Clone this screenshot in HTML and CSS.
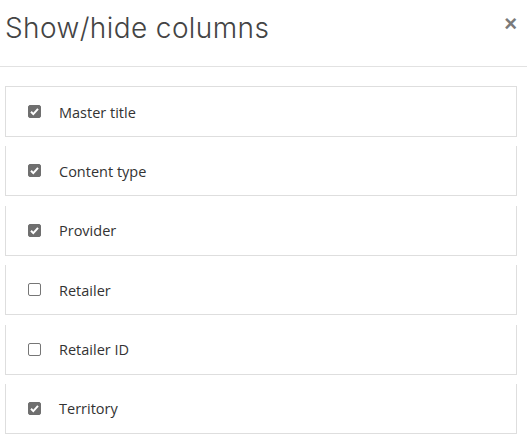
FILE: index.html
```html
<!DOCTYPE html>
<html>
<head>
  <title>Show/hide columns</title>
  <meta name="viewport" content="width=device-width, initial-scale=1.0">
  <link rel="stylesheet" href="styles.css">
</head>
<body>
  <div class="modal">
    <div class="modal-header">
      <h2 class="modal-title">Show/hide columns</h2>
      <button class="close" type="button">&times;</button>
    </div>
    <ul class="column-list">
      <li class="column-item"><label><input type="checkbox" checked> <span>Master title</span></label></li>
      <li class="column-item"><label><input type="checkbox" checked> <span>Content type</span></label></li>
      <li class="column-item"><label><input type="checkbox" checked> <span>Provider</span></label></li>
      <li class="column-item"><label><input type="checkbox"> <span>Retailer</span></label></li>
      <li class="column-item"><label><input type="checkbox"> <span>Retailer ID</span></label></li>
      <li class="column-item"><label><input type="checkbox" checked> <span>Territory</span></label></li>
    </ul>
  </div>
</body>
</html>
```

FILE: styles.css
```css
/* modal reset */
html, body, h2, ul, li {
  margin: 0;
  padding: 0;
}
body {
  background: #fff;
  font-family: "Open Sans", "Liberation Sans", sans-serif;
  color: #333;
}
ul {
  list-style: none;
}

.modal-header {
  display: flex;
  justify-content: space-between;
  align-items: flex-start;
  height: 66px;
  border-bottom: 1px solid #e2e2e2;
  padding: 0 10px 0 5px;
}
.modal-title {
  font-family: Inter, "Open Sans", sans-serif;
  font-weight: 300;
  font-size: 28px;
  letter-spacing: 0.4px;
  color: #444;
  line-height: 1;
  padding-top: 14px;
}
.close {
  border: 0;
  background: none;
  padding: 0;
  margin-top: 13px;
  font-family: "Liberation Sans", sans-serif;
  font-size: 22px;
  font-weight: bold;
  line-height: 1;
  color: #7a7a7a;
  cursor: pointer;
}

.column-list {
  padding: 19px 10px 0 5px;
}
.column-item {
  height: 49px;
  border: 1px solid #dedede;
  border-top: 0;
  margin-top: 9.4px;
}
.column-item:first-child {
  border-top: 1px solid #dedede;
  margin-top: 0;
}
.column-item label {
  display: flex;
  align-items: center;
  height: 100%;
  padding: 1px 0 0 22px;
  box-sizing: border-box;
  font-size: 14.5px;
}
.column-item input {
  appearance: none;
  width: 13px;
  height: 13px;
  margin: -1px 18px 0 0;
  border: 1px solid #767676;
  border-radius: 2px;
  background: #fff;
}
.column-item input:checked {
  border-color: #6f6f6f;
  background: #6f6f6f url("data:image/svg+xml,%3Csvg xmlns='http://www.w3.org/2000/svg' viewBox='0 0 13 13'%3E%3Cpath d='M3 6.8l2.3 2.3L10 3.9' fill='none' stroke='%23fff' stroke-width='2'/%3E%3C/svg%3E") center / 13px 13px no-repeat;
}
```
